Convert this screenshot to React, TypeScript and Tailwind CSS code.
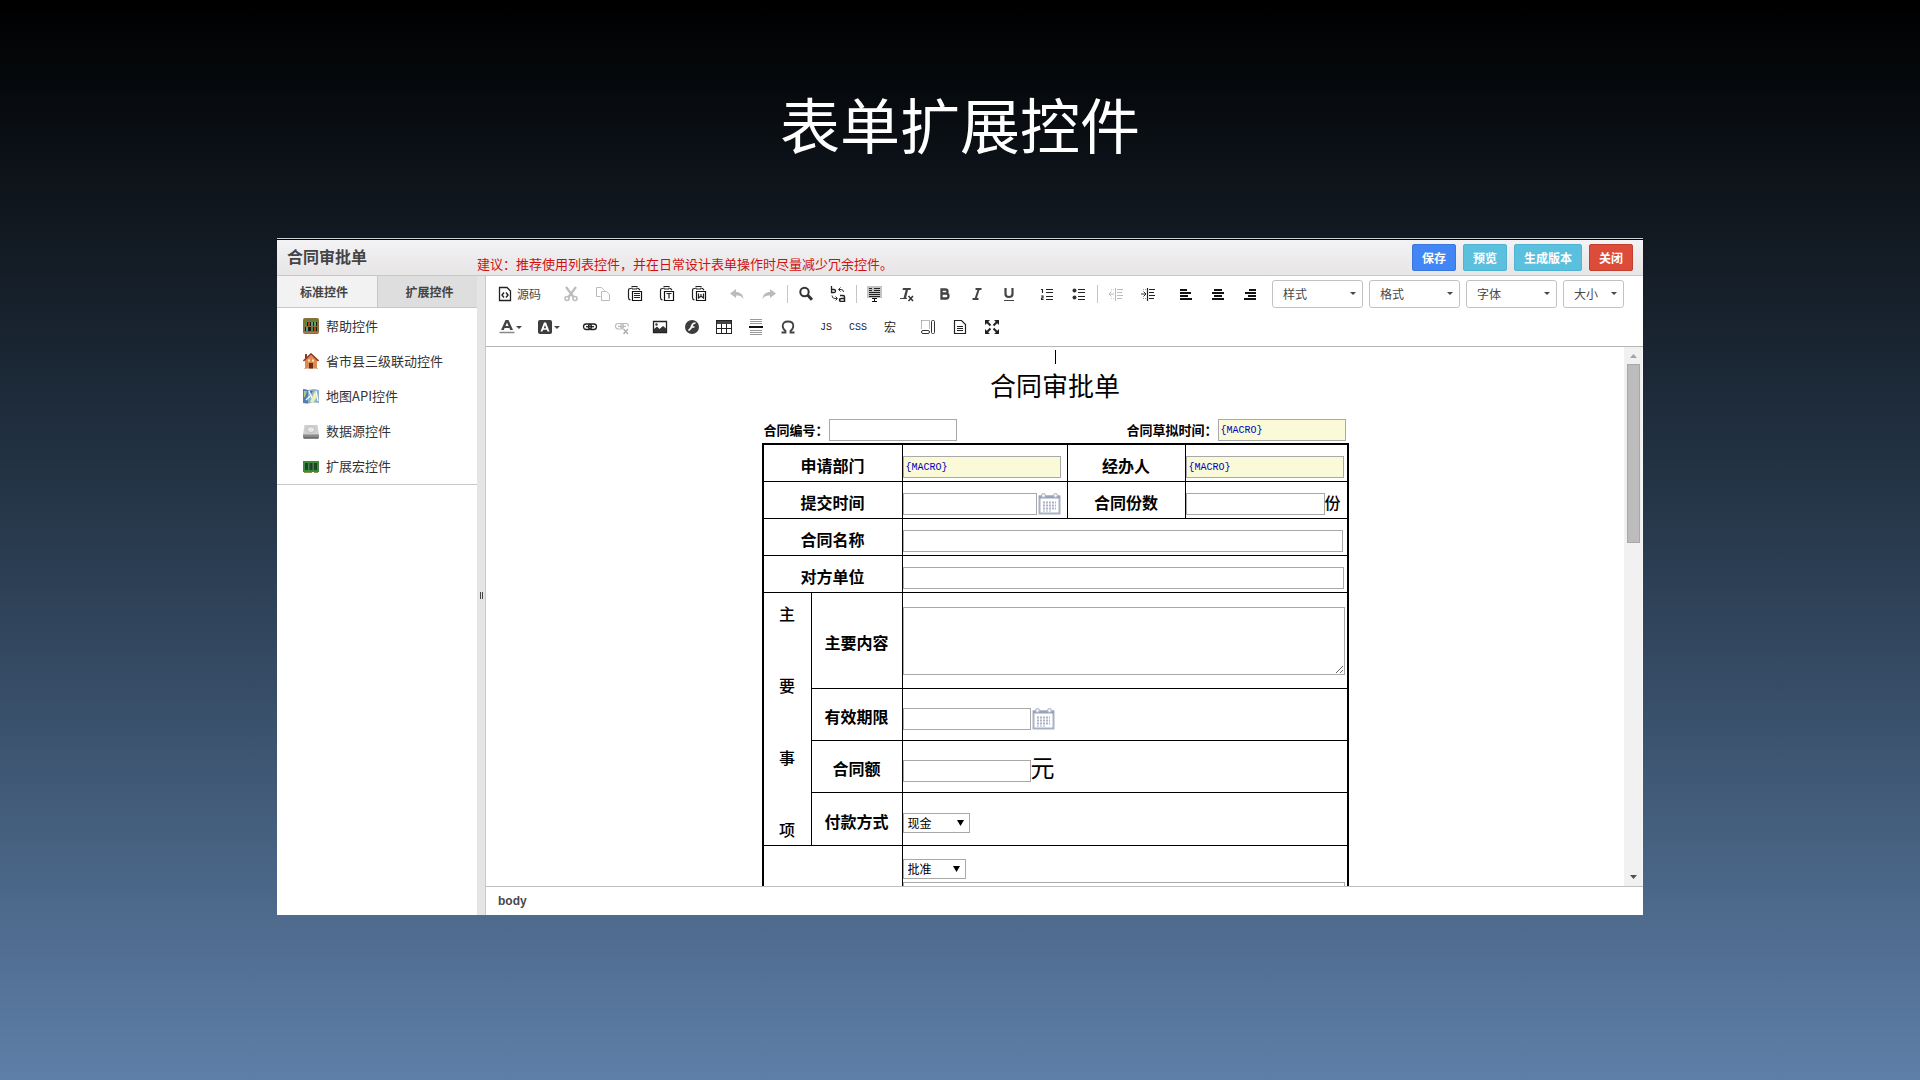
import type { ReactNode } from "react";

interface IconProps {
  children: ReactNode;
  size?: number;
  crisp?: boolean;
}

function Icon({ children, size = 16, crisp }: IconProps) {
  return (
    <svg
      width={size}
      height={size}
      viewBox={`0 0 ${size} ${size}`}
      fill="none"
      shapeRendering={crisp ? "crispEdges" : "auto"}
      aria-hidden="true"
    >
      {children}
    </svg>
  );
}

const clipboard = (
  <>
    <path d="M4.5 2.5H3.5Q1.5 2.5 1.5 4.5V11.5Q1.5 13.5 3.5 14M10.5 2.5H11.5L13 4" stroke="#222" strokeWidth="1.2" />
    <path d="M4.500 0.500H10.500M5 1.500V3H10V1.500" stroke="#222" />
    <path d="M5.500 5.500H14.500V14.500H5.500Z" stroke="#111" fill="#fff" strokeWidth="1.2" />
  </>
);

const icons = {
  source: (
    <Icon>
      <path d="M2.5 1.5H10L13.5 5V14.5H2.5Z" stroke="#222" strokeWidth="1.3" />
      <path d="M7 6.5L5 9L7 11.5M9 6.5L11 9L9 11.5" stroke="#222" strokeWidth="1.4" />
    </Icon>
  ),
  cut: (
    <Icon>
      <path d="M3 1L10.5 11M13 1L5.500 11" stroke="#bbb" strokeWidth="2.2" />
      <circle cx="4" cy="12.500" r="2" stroke="#bbb" strokeWidth="1.500" />
      <circle cx="12" cy="12.500" r="2" stroke="#bbb" strokeWidth="1.500" />
    </Icon>
  ),
  copy: (
    <Icon>
      <path d="M5.500 10.500H1.500V1.500H6.500L9.500 4.500" stroke="#bbb" />
      <path d="M6.500 5.500H11.500L14.500 8.500V14.500H6.500Z" stroke="#bbb" />
    </Icon>
  ),
  paste: (
    <Icon>
      {clipboard}
      <path d="M7 7.500H13M7 9.500H13M7 11.500H13" stroke="#222" />
    </Icon>
  ),
  pasteText: (
    <Icon>
      {clipboard}
      <path d="M7.500 7.500H12.500M10 7.500V12.500" stroke="#222" strokeWidth="1.200" />
    </Icon>
  ),
  pasteWord: (
    <Icon>
      {clipboard}
      <path d="M7.500 7.500V12L10 10L12.500 12V7.500M10 8V10" stroke="#222" strokeWidth="1.200" />
    </Icon>
  ),
  undo: (
    <Icon>
      <path d="M1 7.500L7 3V6C11 6 14 8 14.500 13C12.500 10 10.500 9.500 7 9.500V12Z" fill="#bbb" />
    </Icon>
  ),
  redo: (
    <Icon>
      <path d="M15 7.500L9 3V6C5 6 2 8 1.500 13C3.500 10 5.500 9.500 9 9.500V12Z" fill="#bbb" />
    </Icon>
  ),
  find: (
    <Icon>
      <circle cx="6.500" cy="6" r="4.200" stroke="#333" strokeWidth="2" />
      <path d="M9.800 9.300L14 13.700" stroke="#333" strokeWidth="3" />
    </Icon>
  ),
  replace: (
    <Icon>
      <path d="M1.500 0V6.500H4Q5.500 6.500 5.500 5T4 3.500H1.500" stroke="#222" strokeWidth="1.300" />
      <path d="M10 9.500H13Q14.500 9.500 14.500 11V15.500H11.500Q9.500 15.500 9.500 14T11.500 12.500H14.500" stroke="#222" strokeWidth="1.500" />
      <path d="M9 3.500H11Q13.500 3.500 13.500 6M10.500 1.500L8.500 3.500L10.500 5.500M2 9.500Q2 12.500 5 12.500H7M5.500 10.500L7.500 12.500L5.500 14.500" stroke="#333" />
    </Icon>
  ),
  selectAll: (
    <Icon crisp>
      <rect x="0" y="0" width="15" height="12" fill="#c4c4c4" />
      <path d="M2 2.500H5M7 2.500H13M2 4.500H5M7 4.500H13M2 6.500H13M2 8.500H13M2 10.500H13" stroke="#222" />
      <path d="M5 12.500H7M8 12.500H10M7.500 12V15M5 15.500H10" stroke="#111" />
    </Icon>
  ),
  removeFormat: (
    <Icon>
      <path d="M4 2H12L11.500 4H9L7 12H4.500L6.700 4H3.500Z" fill="#444" />
      <path d="M1 12.500H8" stroke="#444" />
      <path d="M9.500 10L14 15M14 10L9.500 15" stroke="#333" strokeWidth="1.500" />
    </Icon>
  ),
  bold: (
    <Icon>
      <path d="M4.500 3.500H8.500Q10.500 3.500 10.500 5.500T8.500 7.500H4.500ZM4.500 7.500H9Q11.500 7.500 11.500 10T9 12.500H4.500Z" stroke="#444" strokeWidth="2.300" />
    </Icon>
  ),
  italic: (
    <Icon>
      <path d="M6.500 3H12.500M3.500 13H9.500M9.800 3L6.500 13" stroke="#444" strokeWidth="2" />
    </Icon>
  ),
  underline: (
    <Icon>
      <path d="M4.500 2V8Q4.500 11 8 11T11.500 8V2" stroke="#444" strokeWidth="2.200" />
      <path d="M3 14.500H13" stroke="#444" />
    </Icon>
  ),
  ordered: (
    <Icon>
      <path d="M2 3.500H3.500V7M2 10H4V12H2.500V13.500H4.500" stroke="#222" strokeWidth="1.100" />
      <path d="M7 3.500H14M7 6.500H14M7 10.500H14M7 13.500H14" stroke="#222" />
    </Icon>
  ),
  bullets: (
    <Icon>
      <circle cx="3.500" cy="4.500" r="2" fill="#333" />
      <circle cx="3.500" cy="11.500" r="2" fill="#333" />
      <path d="M7 3.500H14M7 6.500H14M7 10.500H14M7 13.500H14" stroke="#222" />
    </Icon>
  ),
  outdent: (
    <Icon>
      <path d="M7.500 2V15M9 3.500H15M9 6.500H14M9 9.500H15M9 12.500H14" stroke="#bbb" />
      <path d="M1 8H6M3.500 5.500L1 8L3.500 10.500" stroke="#bbb" />
      <path d="M3 3.500H6M3 12.500H6" stroke="#ccc" strokeDasharray="1 1" />
    </Icon>
  ),
  indent: (
    <Icon>
      <path d="M7.500 2V15M9 3.500H15M9 6.500H14M9 9.500H15M9 12.500H14" stroke="#222" strokeWidth="1.200" />
      <path d="M1 8H6M3.500 5.500L6 8L3.500 10.500" stroke="#333" />
      <path d="M3 3.500H6M3 12.500H6" stroke="#999" strokeDasharray="1 1" />
    </Icon>
  ),
  alignLeft: (
    <Icon crisp>
      <path d="M2 4H9M2 7H13M2 10H10M2 13H14" stroke="#111" strokeWidth="2" />
    </Icon>
  ),
  alignCenter: (
    <Icon crisp>
      <path d="M4 4H12M2 7H14M4 10H12M2 13H14" stroke="#111" strokeWidth="2" />
    </Icon>
  ),
  alignRight: (
    <Icon crisp>
      <path d="M7 4H14M3 7H14M6 10H14M2 13H14" stroke="#111" strokeWidth="2" />
    </Icon>
  ),
  textColor: (
    <Icon>
      <path d="M6.500 1H9.500L14 11H11.200L10.400 9H5.600L4.800 11H2ZM8 3.500L6.500 7H9.500Z" fill="#444" fillRule="evenodd" />
      <path d="M0.500 13.500H15.500" stroke="#888" strokeWidth="1.500" />
    </Icon>
  ),
  bgColor: (
    <Icon>
      <rect x="1" y="1" width="14" height="14" rx="2" fill="#3d3d3d" />
      <path d="M7 3.500H9L12.500 12.500H10.500L9.900 10.800H6.100L5.500 12.500H3.500ZM8 6L6.800 9.200H9.200Z" fill="#fff" fillRule="evenodd" />
    </Icon>
  ),
  link: (
    <Icon>
      <rect x="1.500" y="5" width="8" height="5.500" rx="2.700" stroke="#222" strokeWidth="1.300" />
      <rect x="6.500" y="5" width="8" height="5.500" rx="2.700" stroke="#222" strokeWidth="1.300" />
      <path d="M4 7.700H12" stroke="#222" strokeWidth="1.300" />
    </Icon>
  ),
  unlink: (
    <Icon>
      <rect x="1.500" y="4.500" width="8" height="5.500" rx="2.700" stroke="#bbb" strokeWidth="1.200" />
      <path d="M9 9Q6.500 9 6.500 7.200T9 4.500H12Q14.500 4.500 14.500 7.500M4 7.300H12" stroke="#bbb" strokeWidth="1.200" />
      <path d="M9.500 10L14 15M14 10L9.500 15" stroke="#aaa" strokeWidth="1.300" />
    </Icon>
  ),
  image: (
    <Icon>
      <path d="M1.500 2.500H14.500V13.500H1.500Z" stroke="#222" strokeWidth="1.300" />
      <path d="M2 13V10L5 7.500L7.500 10L11 7L14 9.500V13Z" fill="#333" />
      <circle cx="4.500" cy="5.500" r="1.200" fill="#333" />
    </Icon>
  ),
  flash: (
    <Icon>
      <circle cx="8" cy="8" r="7" fill="#3d3d3d" />
      <path d="M11.500 4Q8.500 4 7.800 7T4.500 11.500M7 8H10.500" stroke="#fff" strokeWidth="1.700" />
    </Icon>
  ),
  table: (
    <Icon crisp>
      <path d="M0 1H16V5H0Z" fill="#444" />
      <path d="M0.500 1.500H15.500V14.500H0.500ZM0 9.500H16M5.500 5V15M10.500 5V15" stroke="#222" />
    </Icon>
  ),
  hr: (
    <Icon crisp>
      <path d="M2 0.500H14M2 2.500H14M2 4.500H14M2 11.500H14M2 13.500H14M2 15.500H14" stroke="#999" />
      <path d="M1 8H15" stroke="#111" strokeWidth="2" />
    </Icon>
  ),
  omega: (
    <Icon>
      <path d="M1.500 13.500H5.500V12Q2.700 10 2.700 6.800Q2.700 2.500 8 2.500T13.300 6.800Q13.300 10 10.500 12V13.500H14.500" stroke="#444" strokeWidth="1.800" />
    </Icon>
  ),
  panels: (
    <Icon>
      <path d="M1.500 1.500H9.500V10M1.500 1.500V10" stroke="#777" strokeDasharray="1 1" />
      <rect x="11.500" y="1.500" width="3" height="13" rx="1" stroke="#333" />
      <rect x="1.500" y="11.500" width="8" height="3" rx="1.500" stroke="#333" />
    </Icon>
  ),
  page: (
    <Icon>
      <path d="M2.500 1.500H9.500L13.500 5.500V14.500H2.500Z" stroke="#222" strokeWidth="1.200" />
      <path d="M5 7.500H11M5 9.500H11M5 11.500H11" stroke="#222" />
    </Icon>
  ),
  maximize: (
    <Icon>
      <path d="M1 1H6L1 6ZM15 1H10L15 6ZM1 15H6L1 10ZM15 15H10L15 10Z" fill="#222" />
      <path d="M2.500 2.500L6.500 6.500M13.500 2.500L9.500 6.500M2.500 13.500L6.500 9.500M13.500 13.500L9.500 9.500" stroke="#222" strokeWidth="2" />
    </Icon>
  ),
};

const widgets: { name: string; icon: ReactNode }[] = [
  {
    name: "帮助控件",
    icon: (
      <Icon>
        <rect width="16" height="16" rx="2" fill="#85713c" />
        <path d="M1 1H15V3H1Z" fill="#6f7a35" />
        <path d="M2 4H14V8H2ZM2 9H14V13H2Z" fill="#1d1a14" />
        <path d="M3 4V8M9 9V13" stroke="#3c9a3c" strokeWidth="2" />
        <path d="M6 4V8M12 9V13" stroke="#c9342c" strokeWidth="2" />
        <path d="M9 4V8M4 9V13" stroke="#5a9ca0" strokeWidth="2" />
        <path d="M12 4V8" stroke="#4fae4f" strokeWidth="2" />
        <path d="M1 14.500H15" stroke="#a87f4c" />
      </Icon>
    ),
  },
  {
    name: "省市县三级联动控件",
    icon: (
      <Icon>
        <path d="M2 1H4V5H2Z" fill="#8b3d20" />
        <path d="M2 7L8 2L14 7V15.500H2Z" fill="#e08a52" />
        <path d="M0.500 8L8 1L15.500 8" stroke="#8a3a20" strokeWidth="1.600" />
        <path d="M6 15.500V10H10V15.500Z" fill="#6b2c18" />
        <path d="M5 7.500H7M9 7.500H11" stroke="#fbe3c6" strokeWidth="2" />
        <path d="M1 15.500H5M11 15.500H15" stroke="#d9b8a5" />
      </Icon>
    ),
  },
  {
    name: "地图API控件",
    icon: (
      <Icon>
        <path d="M0 1L5 2L11 1L16 2V15L11 14.500L5 15.500L0 15Z" fill="#8fb3cf" />
        <path d="M0 1L5 2V15.500L0 15Z" fill="#4f7fae" />
        <path d="M1 3H4L2 9H1Z" fill="#a8c98c" />
        <path d="M7 14L12 3L14 9L10 15Z" fill="#f0eeb0" />
        <path d="M6 3L9 10M3 12L7 8M13 3L15 13" stroke="#fff" strokeWidth="1.200" />
        <path d="M7 3L10 2.500L8 6Z" fill="#3f6d9c" />
      </Icon>
    ),
  },
  {
    name: "数据源控件",
    icon: (
      <Icon>
        <path d="M1.500 2H14.500L16 12H0Z" fill="#cfcfcf" />
        <path d="M0 11.500H16V15.500H0Z" fill="#8a8a8a" />
        <path d="M1 15H15" stroke="#4a4a4a" />
        <ellipse cx="8" cy="6.500" rx="4" ry="3" fill="#e6e6e6" stroke="#bdbdbd" />
      </Icon>
    ),
  },
  {
    name: "扩展宏控件",
    icon: (
      <Icon>
        <path d="M0 3H16V14H0Z" fill="#3c8a3c" />
        <path d="M2 5H5V12H2ZM6.500 5H9.500V12H6.500ZM11 5H14V12H11Z" fill="#23402a" />
        <path d="M1 14.500H9M11 14.500H15" stroke="#7a9a50" />
      </Icon>
    ),
  },
];

const disabledTools = ["剪切", "复制", "撤消", "重做", "减少缩进量", "取消超链接"];

function Tool({ label, children }: { label: string; children: ReactNode }) {
  return (
    <button
      type="button"
      aria-label={label}
      disabled={disabledTools.includes(label)}
      className="flex h-7 w-8 items-center justify-center text-[#222]"
    >
      {children}
    </button>
  );
}

function Separator() {
  return <div className="mx-0.5 h-[18px] w-px bg-[#c6c6c6]" />;
}

function Caret() {
  return (
    <svg width="6" height="3" viewBox="0 0 6 3" aria-hidden="true">
      <path d="M0 0H6L3 3Z" fill="#474747" />
    </svg>
  );
}

function Combo({ label, width }: { label: string; width: string }) {
  return (
    <div className={`relative h-7 ${width}`}>
      <select
        aria-label={label}
        className="block h-full w-full appearance-none rounded-[3px] border border-[#c2c2c2] bg-white pl-2.5 text-xs text-[#474747]"
      >
        <option>{label}</option>
      </select>
      <div className="pointer-events-none absolute top-3 right-[7px]">
        <Caret />
      </div>
    </div>
  );
}

function ActionButton({ color, children }: { color: string; children: ReactNode }) {
  return (
    <button type="button" className={`h-[27px] rounded-[2px] border px-[9px] text-xs font-bold text-white ${color}`}>
      {children}
    </button>
  );
}

function Field({ id, width, macro }: { id: string; width: string; macro?: boolean }) {
  return (
    <input
      id={id}
      type="text"
      defaultValue={macro ? "{MACRO}" : ""}
      className={`h-[22px] shrink-0 border border-[#a9a9a9] px-0.5 font-['Liberation_Mono',monospace] text-[10px] font-normal text-[#0000c0] ${
        macro ? "bg-[#fafad8]" : "bg-white"
      } ${width}`}
    />
  );
}

function FormSelect({ id, value, width, label }: { id: string; value: string; width: string; label?: string }) {
  return (
    <div className={`relative h-5 ${width}`}>
      <select
        id={id}
        aria-label={label}
        className="block h-full w-full appearance-none border border-[#a9a9a9] bg-white pl-1 text-xs leading-4 text-black"
      >
        <option>{value}</option>
      </select>
      <svg className="pointer-events-none absolute top-[7px] right-1.5" width="7" height="6" viewBox="0 0 7 6" aria-hidden="true">
        <path d="M0 0H7L3.500 6Z" fill="#000" />
      </svg>
    </div>
  );
}

function CalendarButton({ label }: { label: string }) {
  return (
    <button type="button" aria-label={label} className="ml-px">
      <svg width="23" height="22" viewBox="0 0 23 22" fill="none" aria-hidden="true">
        <path d="M1.500 3.500H21.500V20.500H1.500Z" fill="#fff" stroke="#a9b1c4" strokeWidth="2" />
        <path d="M1 2.500H22V5.500H1Z" fill="#98a2b8" />
        <circle cx="5.500" cy="2.500" r="2" fill="#eef0f5" stroke="#a9b1c4" />
        <circle cx="17.500" cy="2.500" r="2" fill="#eef0f5" stroke="#a9b1c4" />
        <path d="M5 9.500H18M5 12.500H18M5 15.500H18" stroke="#aab2c5" strokeWidth="2" strokeDasharray="2 1" />
        <path d="M5 18H13" stroke="#aab2c5" strokeDasharray="2 1" />
      </svg>
    </button>
  );
}

function LabelCell({ htmlFor, span = 1, className = "", children }: { htmlFor: string; span?: number; className?: string; children: ReactNode }) {
  return (
    <th colSpan={span} className={`border-b border-black pt-[3px] text-base leading-6 font-bold ${className}`}>
      <label htmlFor={htmlFor}>{children}</label>
    </th>
  );
}

function ValueCell({ span = 1, children }: { span?: number; children: ReactNode }) {
  return (
    <td colSpan={span} className="border-b border-l border-black pt-2">
      <div className="flex items-center">{children}</div>
    </td>
  );
}

function Toolbar() {
  return (
    <div className="flex h-[71px] flex-col gap-[5px] border-b border-[#b6b6b6] bg-white pt-1 pl-1.5">
      <div className="flex gap-1.5">
        <button type="button" className="flex h-7 w-[57px] items-center gap-1 pl-[5px] text-xs text-[#474747]">
          {icons.source}
          源码
        </button>
        <div className="flex">
          <Tool label="剪切">{icons.cut}</Tool>
          <Tool label="复制">{icons.copy}</Tool>
          <Tool label="粘贴">{icons.paste}</Tool>
          <Tool label="粘贴为无格式文本">{icons.pasteText}</Tool>
          <Tool label="从 MS Word 粘贴">{icons.pasteWord}</Tool>
        </div>
        <div className="flex items-center">
          <Tool label="撤消">{icons.undo}</Tool>
          <Tool label="重做">{icons.redo}</Tool>
          <Separator />
          <Tool label="查找">{icons.find}</Tool>
          <Tool label="替换">{icons.replace}</Tool>
          <Separator />
          <Tool label="全选">{icons.selectAll}</Tool>
          <Tool label="清除格式">{icons.removeFormat}</Tool>
        </div>
        <div className="flex">
          <Tool label="加粗">{icons.bold}</Tool>
          <Tool label="倾斜">{icons.italic}</Tool>
          <Tool label="下划线">{icons.underline}</Tool>
        </div>
        <div className="flex items-center">
          <Tool label="编号列表">{icons.ordered}</Tool>
          <Tool label="项目列表">{icons.bullets}</Tool>
          <Separator />
          <Tool label="减少缩进量">{icons.outdent}</Tool>
          <Tool label="增加缩进量">{icons.indent}</Tool>
        </div>
        <div className="flex">
          <Tool label="左对齐">{icons.alignLeft}</Tool>
          <Tool label="居中">{icons.alignCenter}</Tool>
          <Tool label="右对齐">{icons.alignRight}</Tool>
        </div>
        <Combo label="样式" width="w-[91px]" />
        <Combo label="格式" width="w-[91px]" />
        <Combo label="字体" width="w-[91px]" />
        <Combo label="大小" width="w-[61px]" />
      </div>
      <div className="flex gap-1.5">
        <div className="flex">
          <button type="button" aria-label="文本颜色" className="flex h-7 w-[38px] items-center gap-px pl-[7px]">
            {icons.textColor}
            <Caret />
          </button>
          <button type="button" aria-label="背景颜色" className="flex h-7 w-[38px] items-center gap-px pl-[7px]">
            {icons.bgColor}
            <Caret />
          </button>
        </div>
        <div className="flex">
          <Tool label="插入超链接">{icons.link}</Tool>
          <Tool label="取消超链接">{icons.unlink}</Tool>
        </div>
        <div className="flex">
          <Tool label="图像">{icons.image}</Tool>
          <Tool label="Flash">{icons.flash}</Tool>
          <Tool label="表格">{icons.table}</Tool>
          <Tool label="水平线">{icons.hr}</Tool>
          <Tool label="特殊符号">{icons.omega}</Tool>
        </div>
        <div className="flex font-['Liberation_Mono',monospace] text-[10px]">
          <Tool label="JS">JS</Tool>
          <Tool label="CSS">CSS</Tool>
          <Tool label="宏">
            <span className="font-['Noto_Sans_CJK_SC',sans-serif] text-xs">宏</span>
          </Tool>
        </div>
        <div className="flex">
          <Tool label="显示区块">{icons.panels}</Tool>
          <Tool label="模板">{icons.page}</Tool>
          <Tool label="全屏">{icons.maximize}</Tool>
        </div>
      </div>
    </div>
  );
}

function ContractForm() {
  return (
    <form className="w-[587px] text-black">
      <div className="mx-auto mt-[3px] h-3.5 w-px bg-black" />
      <h2 className="mt-1.5 text-center text-[26px] leading-[30px]">合同审批单</h2>
      <div className="mt-[19px] mb-0.5 flex items-center justify-between pr-[3px] pl-0.5 text-[13px] font-bold">
        <div className="flex items-center">
          <label htmlFor="contract-no" className="w-[65px]">合同编号：</label>
          <Field id="contract-no" width="w-[128px]" />
        </div>
        <div className="flex items-center">
          <label htmlFor="draft-time">合同草拟时间：</label>
          <Field id="draft-time" width="w-[128px]" macro />
        </div>
      </div>
      <table className="w-full table-fixed border-separate border-spacing-0 border-2 border-black">
        <colgroup>
          <col className="w-[47px]" />
          <col className="w-[91px]" />
          <col className="w-[165px]" />
          <col className="w-[118px]" />
          <col />
        </colgroup>
        <tbody>
          <tr className="h-[37px]">
            <LabelCell htmlFor="department" span={2}>申请部门</LabelCell>
            <ValueCell>
              <Field id="department" width="w-[158px]" macro />
            </ValueCell>
            <LabelCell htmlFor="operator" className="border-l">经办人</LabelCell>
            <ValueCell>
              <Field id="operator" width="w-[158px]" macro />
            </ValueCell>
          </tr>
          <tr className="h-[37px]">
            <LabelCell htmlFor="submit-time" span={2}>提交时间</LabelCell>
            <ValueCell>
              <Field id="submit-time" width="w-[134px]" />
              <CalendarButton label="选择提交时间" />
            </ValueCell>
            <LabelCell htmlFor="copies" className="border-l">合同份数</LabelCell>
            <ValueCell>
              <Field id="copies" width="w-[139px]" />
              <span className="-mt-1 text-base leading-5 font-medium">份</span>
            </ValueCell>
          </tr>
          <tr className="h-[37px]">
            <LabelCell htmlFor="contract-name" span={2}>合同名称</LabelCell>
            <ValueCell span={3}>
              <Field id="contract-name" width="w-[440px]" />
            </ValueCell>
          </tr>
          <tr className="h-[37px]">
            <LabelCell htmlFor="other-party" span={2}>对方单位</LabelCell>
            <ValueCell span={3}>
              <Field id="other-party" width="w-[441px]" />
            </ValueCell>
          </tr>
          <tr className="h-24">
            <th rowSpan={4} className="border-b border-black pt-[3px] text-base leading-4 font-medium">
              <div className="flex h-[232px] flex-col justify-between">
                <span>主</span>
                <span>要</span>
                <span>事</span>
                <span>项</span>
              </div>
            </th>
            <LabelCell htmlFor="content" className="border-l">主要内容</LabelCell>
            <td colSpan={3} className="border-b border-l border-black">
              <textarea id="content" className="block h-[68px] w-[442px] border border-[#a9a9a9] bg-white" />
            </td>
          </tr>
          <tr className="h-[52px]">
            <LabelCell htmlFor="valid-until" className="border-l">有效期限</LabelCell>
            <ValueCell span={3}>
              <Field id="valid-until" width="w-[128px]" />
              <CalendarButton label="选择有效期限" />
            </ValueCell>
          </tr>
          <tr className="h-[52px]">
            <LabelCell htmlFor="amount" className="border-l">合同额</LabelCell>
            <ValueCell span={3}>
              <Field id="amount" width="w-[128px]" />
              <span className="-mt-2 text-2xl leading-6">元</span>
            </ValueCell>
          </tr>
          <tr className="h-[53px]">
            <LabelCell htmlFor="payment" className="border-l">付款方式</LabelCell>
            <ValueCell span={3}>
              <FormSelect id="payment" value="现金" width="w-[67px]" />
            </ValueCell>
          </tr>
          <tr className="h-[120px]">
            <td colSpan={2} />
            <td colSpan={3} className="border-l border-black pt-[13px] align-top">
              <FormSelect id="approval" value="批准" width="w-[63px]" label="审批结果" />
              <textarea aria-label="审批意见" className="mt-[3px] block h-[68px] w-[442px] border border-[#a9a9a9] bg-white" />
            </td>
          </tr>
        </tbody>
      </table>
    </form>
  );
}

export default function App() {
  return (
    <main className="min-h-screen bg-linear-to-b/srgb from-black via-[#283a4e] to-[#5e7fa8] px-[277px] pt-[93px] pb-[165px] font-['Noto_Sans_CJK_SC',sans-serif]">
      <h1 className="text-center text-[60px] leading-[60px] text-white">表单扩展控件</h1>

      <section className="mt-[85px] border-t border-[#cfd2d5] bg-white">
        <header className="flex h-[37px] items-start justify-between border-t border-b border-t-black border-b-[#c8c8c8] bg-linear-to-b from-[#f3f2f4] to-[#e7e5e6] pr-2.5">
          <div className="flex">
            <h2 className="w-[200px] pt-1 pl-2.5 text-base leading-6 font-bold text-[#444]">合同审批单</h2>
            <p className="pt-4 text-[13px] leading-4 text-[#d01010]">
              建议：推荐使用列表控件，并在日常设计表单操作时尽量减少冗余控件。
            </p>
          </div>
          <div className="flex gap-[7px] pt-1">
            <ActionButton color="bg-[#4285f4] border-[#3a76dc]">保存</ActionButton>
            <ActionButton color="bg-[#5bc0de] border-[#4fb3d2]">预览</ActionButton>
            <ActionButton color="bg-[#5bc0de] border-[#4fb3d2]">生成版本</ActionButton>
            <ActionButton color="bg-[#dd4b39] border-[#c23f30]">关闭</ActionButton>
          </div>
        </header>

        <div className="flex">
          <aside className="w-[200px] shrink-0">
            <div className="flex h-8 border-b border-[#c8c8c8] text-xs font-bold text-[#444]">
              <button type="button" className="w-[101px] border-r border-[#c8c8c8] bg-[#f2f2f2] pr-1.5">标准控件</button>
              <button type="button" className="flex-1 bg-[#dedede] pl-1">扩展控件</button>
            </div>
            <ul className="border-b border-[#c8c8c8] pb-px text-[13px] text-[#333]">
              {widgets.map((widget) => (
                <li key={widget.name} className="flex h-[35px] items-center gap-[7px] pl-[26px]">
                  {widget.icon}
                  {widget.name}
                </li>
              ))}
            </ul>
          </aside>

          <div className="flex w-[9px] shrink-0 items-center justify-center gap-px border-r border-[#c8c8c8] bg-[#e5e5e5]">
            <div className="h-[7px] w-px bg-[#444]" />
            <div className="h-[7px] w-px bg-[#444]" />
          </div>

          <div className="min-w-0 flex-1">
            <Toolbar />
            <div className="flex h-[540px] border-b border-[#c0c0c0]">
              <div className="flex flex-1 justify-center overflow-hidden">
                <ContractForm />
              </div>
              <div className="flex w-[19px] flex-col items-center border-r border-[#f8f8f8] bg-[#f1f1f1] py-[7px]">
                <svg width="7" height="4" viewBox="0 0 7 4" aria-hidden="true">
                  <path d="M0 4H7L3.500 0Z" fill="#a3a3a3" />
                </svg>
                <div className="mt-1.5 h-[179px] w-[13px] border border-[#a8a8a8] bg-[#bcbcbc]" />
                <svg className="mt-auto" width="7" height="4" viewBox="0 0 7 4" aria-hidden="true">
                  <path d="M0 0H7L3.500 4Z" fill="#505050" />
                </svg>
              </div>
            </div>
            <footer className="flex h-7 items-center pl-3 font-['Liberation_Sans',sans-serif] text-xs font-bold text-[#484848]">
              body
            </footer>
          </div>
        </div>
      </section>
    </main>
  );
}
